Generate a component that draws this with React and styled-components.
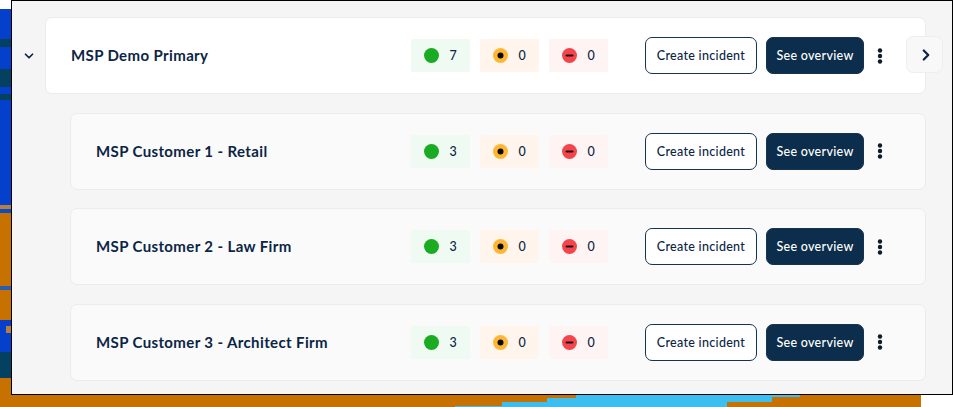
import styled, { createGlobalStyle } from 'styled-components';
import { ChevronDown, ChevronRight } from 'lucide-react';

const GlobalStyle = createGlobalStyle`
  html, body {
    margin: 0;
    background: #fff;
    font-family: "Lato", "Open Sans", sans-serif;
  }
`;

const Page = styled.div`
  position: relative;
  width: 953px;
  height: 407px;
  overflow: hidden;
`;

const Backdrop = styled.svg`
  position: absolute;
  inset: 0;
`;

const Panel = styled.main`
  position: relative;
  box-sizing: border-box;
  width: 942px;
  height: 395px;
  margin-left: 11px;
  padding: 16px 26px 0 0;
  border: 1px solid #000;
  background: #f5f5f5;
  display: flex;
  flex-direction: column;
  gap: 18.5px;
`;

const ParentRow = styled.div`
  display: flex;
  align-items: center;
`;

const Toggle = styled.div`
  width: 33px;
  display: flex;
  justify-content: center;
  color: #0b2545;
`;

const ChildList = styled.div`
  margin-left: 58px;
  display: flex;
  flex-direction: column;
  gap: 18.5px;
`;

const Card = styled.section`
  position: relative;
  flex: 1 0 auto;
  box-sizing: border-box;
  height: 77px;
  padding: 0 42px 0 25px;
  display: flex;
  align-items: center;
  border: 1px solid #ececec;
  border-radius: 7px;
  background: ${(p) => (p.$primary ? '#fff' : '#fafafa')};
`;

const Title = styled.h2`
  flex: 1;
  margin: 0 0 1px;
  font-size: 15px;
  font-weight: 700;
  letter-spacing: 0.38px;
  color: #0b2545;
`;

const Badges = styled.div`
  display: flex;
  gap: 10px;
  margin-right: 37px;
`;

const Badge = styled.div`
  box-sizing: border-box;
  width: 59px;
  height: 33px;
  padding-left: 12.5px;
  display: flex;
  align-items: center;
  gap: 11px;
  border-radius: 2px;
  background: ${(p) => p.$tint};
  color: #0b2545;
  font-size: 12.5px;
  font-weight: 500;
`;

const Button = styled.button`
  box-sizing: border-box;
  height: 37px;
  width: ${(p) => p.$width}px;
  padding: 0;
  border-radius: 7px;
  border: 1px solid #17344f;
  font-family: inherit;
  font-size: 12.5px;
  font-weight: 500;
  letter-spacing: 0.3px;
  background: ${(p) => (p.$dark ? '#0c2d4b' : '#fff')};
  color: ${(p) => (p.$dark ? '#fff' : '#0b2545')};
`;

const Actions = styled.div`
  display: flex;
  align-items: center;
  gap: 9px;
`;

const Kebab = styled.svg`
  display: block;
  margin-left: 4px;
`;

const NextButton = styled.div`
  position: absolute;
  top: 18px;
  right: -18px;
  box-sizing: border-box;
  width: 37px;
  height: 37px;
  padding-left: 2px;
  display: flex;
  align-items: center;
  justify-content: center;
  border: 1px solid #eee;
  border-radius: 7px;
  background: #f8f8f8;
  color: #0b2545;
`;

const StatusIcon = ({ kind }) => (
  <svg width="15" height="15" viewBox="0 0 15 15">
    {kind === 'ok' && <circle cx="7.5" cy="7.5" r="7.5" fill="#1bab22" />}
    {kind === 'warn' && (
      <>
        <circle cx="7.5" cy="7.5" r="7.5" fill="#fdb733" />
        <circle cx="7.5" cy="7.5" r="3" fill="#0a0a0a" />
      </>
    )}
    {kind === 'down' && (
      <>
        <circle cx="7.5" cy="7.5" r="7.5" fill="#f4444c" />
        <rect x="3.5" y="6.5" width="8" height="2" rx="1" fill="#1a1214" />
      </>
    )}
  </svg>
);

const Tenant = ({ name, ok, primary, children }) => (
  <Card $primary={primary}>
    <Title>{name}</Title>
    <Badges>
      <Badge $tint="#eefaf2">
        <StatusIcon kind="ok" />
        {ok}
      </Badge>
      <Badge $tint="#fff5ed">
        <StatusIcon kind="warn" />0
      </Badge>
      <Badge $tint="#fff4f4">
        <StatusIcon kind="down" />0
      </Badge>
    </Badges>
    <Actions>
      <Button $width={112}>Create incident</Button>
      <Button $dark $width={98}>See overview</Button>
      <Kebab width="6" height="16" viewBox="0 0 6 16" fill="#0d1b2a">
        <circle cx="3" cy="2.5" r="2.2" />
        <circle cx="3" cy="8" r="2.2" />
        <circle cx="3" cy="13.5" r="2.2" />
      </Kebab>
    </Actions>
    {children}
  </Card>
);

const customers = ['MSP Customer 1 - Retail', 'MSP Customer 2 - Law Firm', 'MSP Customer 3 - Architect Firm'];

export default function App() {
  return (
    <Page>
      <GlobalStyle />
      <Backdrop width="953" height="407" viewBox="0 0 953 407">
        <rect x="0" y="9" width="12" height="196" fill="#0540cc" />
        <rect x="0" y="39" width="12" height="8" fill="#04405f" />
        <rect x="0" y="69" width="12" height="18" fill="#04405f" />
        <rect x="0" y="94" width="12" height="6" fill="#04405f" />
        <rect x="0" y="205" width="12" height="4" fill="#b5803f" />
        <rect x="0" y="209" width="12" height="4" fill="#0d4bc4" />
        <rect x="0" y="213" width="12" height="73" fill="#c67100" />
        <rect x="0" y="286" width="12" height="4" fill="#2a5cb0" />
        <rect x="0" y="290" width="12" height="30" fill="#c67100" />
        <rect x="0" y="320" width="12" height="32" fill="#0540cc" />
        <rect x="6" y="326" width="6" height="7" fill="#b5803f" />
        <rect x="0" y="352" width="12" height="26" fill="#04405f" />
        <rect x="0" y="378" width="921" height="29" fill="#c67100" />
        <polygon
          points="455,407 455,406 502,406 502,402 547,402 547,398 576,398 576,395 800,395 800,397 772,397 772,402 727,402 727,407"
          fill="#3cbff0"
        />
      </Backdrop>
      <Panel>
        <ParentRow>
          <Toggle>
            <ChevronDown size={14} strokeWidth={3} />
          </Toggle>
          <Tenant primary name="MSP Demo Primary" ok={7}>
            <NextButton>
              <ChevronRight size={18} strokeWidth={3} />
            </NextButton>
          </Tenant>
        </ParentRow>
        <ChildList>
          {customers.map((name) => (
            <Tenant key={name} name={name} ok={3} />
          ))}
        </ChildList>
      </Panel>
    </Page>
  );
}
